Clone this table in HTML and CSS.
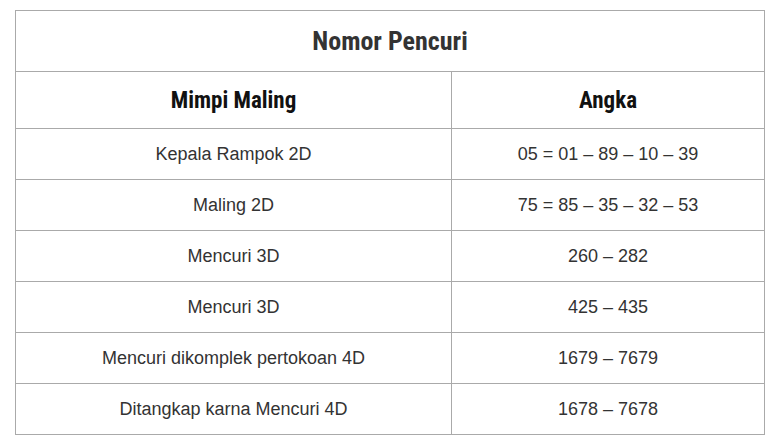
FILE: index.html
```html
<!DOCTYPE html>
<html lang="id">
<head>
<meta charset="utf-8">
<title>Nomor Pencuri</title>
<link rel="stylesheet" href="styles.css">
</head>
<body>
<table class="tbl">
  <colgroup><col class="c1"><col class="c2"></colgroup>
  <thead>
    <tr class="title-row"><th colspan="2">Nomor Pencuri</th></tr>
    <tr class="head-row"><th>Mimpi Maling</th><th>Angka</th></tr>
  </thead>
  <tbody>
    <tr><td>Kepala Rampok 2D</td><td>05 = 01 – 89 – 10 – 39</td></tr>
    <tr><td>Maling 2D</td><td>75 = 85 – 35 – 32 – 53</td></tr>
    <tr><td>Mencuri 3D</td><td>260 – 282</td></tr>
    <tr><td>Mencuri 3D</td><td>425 – 435</td></tr>
    <tr><td>Mencuri dikomplek pertokoan 4D</td><td>1679 – 7679</td></tr>
    <tr><td>Ditangkap karna Mencuri 4D</td><td>1678 – 7678</td></tr>
  </tbody>
</table>
</body>
</html>
```
FILE: styles.css
```css
html, body { margin: 0; padding: 0; background: #fff; }
body { padding: 10px 0 0 15px; }
.tbl {
  border-collapse: collapse;
  width: 749px;
  table-layout: fixed;
  font-family: "Liberation Sans", Arial, sans-serif;
  font-size: 18px;
  color: #333;
}
.c1 { width: 436px; }
.c2 { width: 313px; }
.tbl th, .tbl td {
  border: 1px solid #aaa;
  text-align: center;
  padding: 0;
}
.tbl th { font-family: "Roboto", sans-serif; font-weight: 700; font-stretch: condensed; }
.title-row th { height: 60px; font-size: 26px; color: #333; }
.head-row th { height: 56px; font-size: 23px; color: #111; }
.tbl td { height: 49px; padding-top: 1px; }
```
